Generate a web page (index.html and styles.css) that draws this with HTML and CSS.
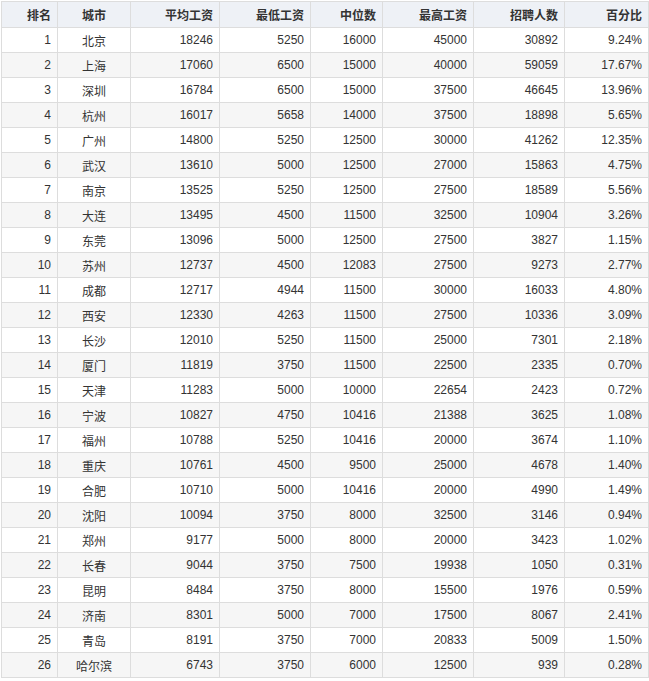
FILE: index.html
```html
<!DOCTYPE html>
<html lang="zh">
<head>
<meta charset="utf-8">
<title>城市工资</title>
<link rel="stylesheet" href="styles.css">
</head>
<body>
<table class="salary">
<colgroup>
<col class="c-rank"><col class="c-city"><col class="c-avg"><col class="c-min"><col class="c-med"><col class="c-max"><col class="c-cnt"><col class="c-pct">
</colgroup>
<thead>
<tr><th>排名</th><th class="city">城市</th><th>平均工资</th><th>最低工资</th><th>中位数</th><th>最高工资</th><th>招聘人数</th><th>百分比</th></tr>
</thead>
<tbody>
<tr><td>1</td><td class="city">北京</td><td>18246</td><td>5250</td><td>16000</td><td>45000</td><td>30892</td><td>9.24%</td></tr>
<tr><td>2</td><td class="city">上海</td><td>17060</td><td>6500</td><td>15000</td><td>40000</td><td>59059</td><td>17.67%</td></tr>
<tr><td>3</td><td class="city">深圳</td><td>16784</td><td>6500</td><td>15000</td><td>37500</td><td>46645</td><td>13.96%</td></tr>
<tr><td>4</td><td class="city">杭州</td><td>16017</td><td>5658</td><td>14000</td><td>37500</td><td>18898</td><td>5.65%</td></tr>
<tr><td>5</td><td class="city">广州</td><td>14800</td><td>5250</td><td>12500</td><td>30000</td><td>41262</td><td>12.35%</td></tr>
<tr><td>6</td><td class="city">武汉</td><td>13610</td><td>5000</td><td>12500</td><td>27000</td><td>15863</td><td>4.75%</td></tr>
<tr><td>7</td><td class="city">南京</td><td>13525</td><td>5250</td><td>12500</td><td>27500</td><td>18589</td><td>5.56%</td></tr>
<tr><td>8</td><td class="city">大连</td><td>13495</td><td>4500</td><td>11500</td><td>32500</td><td>10904</td><td>3.26%</td></tr>
<tr><td>9</td><td class="city">东莞</td><td>13096</td><td>5000</td><td>12500</td><td>27500</td><td>3827</td><td>1.15%</td></tr>
<tr><td>10</td><td class="city">苏州</td><td>12737</td><td>4500</td><td>12083</td><td>27500</td><td>9273</td><td>2.77%</td></tr>
<tr><td>11</td><td class="city">成都</td><td>12717</td><td>4944</td><td>11500</td><td>30000</td><td>16033</td><td>4.80%</td></tr>
<tr><td>12</td><td class="city">西安</td><td>12330</td><td>4263</td><td>11500</td><td>27500</td><td>10336</td><td>3.09%</td></tr>
<tr><td>13</td><td class="city">长沙</td><td>12010</td><td>5250</td><td>11500</td><td>25000</td><td>7301</td><td>2.18%</td></tr>
<tr><td>14</td><td class="city">厦门</td><td>11819</td><td>3750</td><td>11500</td><td>22500</td><td>2335</td><td>0.70%</td></tr>
<tr><td>15</td><td class="city">天津</td><td>11283</td><td>5000</td><td>10000</td><td>22654</td><td>2423</td><td>0.72%</td></tr>
<tr><td>16</td><td class="city">宁波</td><td>10827</td><td>4750</td><td>10416</td><td>21388</td><td>3625</td><td>1.08%</td></tr>
<tr><td>17</td><td class="city">福州</td><td>10788</td><td>5250</td><td>10416</td><td>20000</td><td>3674</td><td>1.10%</td></tr>
<tr><td>18</td><td class="city">重庆</td><td>10761</td><td>4500</td><td>9500</td><td>25000</td><td>4678</td><td>1.40%</td></tr>
<tr><td>19</td><td class="city">合肥</td><td>10710</td><td>5000</td><td>10416</td><td>20000</td><td>4990</td><td>1.49%</td></tr>
<tr><td>20</td><td class="city">沈阳</td><td>10094</td><td>3750</td><td>8000</td><td>32500</td><td>3146</td><td>0.94%</td></tr>
<tr><td>21</td><td class="city">郑州</td><td>9177</td><td>5000</td><td>8000</td><td>20000</td><td>3423</td><td>1.02%</td></tr>
<tr><td>22</td><td class="city">长春</td><td>9044</td><td>3750</td><td>7500</td><td>19938</td><td>1050</td><td>0.31%</td></tr>
<tr><td>23</td><td class="city">昆明</td><td>8484</td><td>3750</td><td>8000</td><td>15500</td><td>1976</td><td>0.59%</td></tr>
<tr><td>24</td><td class="city">济南</td><td>8301</td><td>5000</td><td>7000</td><td>17500</td><td>8067</td><td>2.41%</td></tr>
<tr><td>25</td><td class="city">青岛</td><td>8191</td><td>3750</td><td>7000</td><td>20833</td><td>5009</td><td>1.50%</td></tr>
<tr><td>26</td><td class="city">哈尔滨</td><td>6743</td><td>3750</td><td>6000</td><td>12500</td><td>939</td><td>0.28%</td></tr>
</tbody>
</table>
</body>
</html>
```
FILE: styles.css
```css
html, body {
  margin: 0;
  padding: 0;
  background: #fff;
}
body {
  padding: 1px 0 0 1px;
  font-family: "Liberation Sans", "Noto Sans CJK SC", sans-serif;
  font-size: 12px;
  color: #333;
}
.salary {
  border-collapse: collapse;
  table-layout: fixed;
  width: 648px;
}
.c-rank { width: 56px; }
.c-city { width: 73px; }
.c-avg { width: 89px; }
.c-min { width: 91px; }
.c-med { width: 72px; }
.c-max { width: 91px; }
.c-cnt { width: 91px; }
.c-pct { width: 84px; }
.salary th,
.salary td {
  border: 1px solid #dddddd;
  padding: 0 6px;
  text-align: right;
  white-space: nowrap;
  overflow: hidden;
}
.salary th {
  height: 25px;
  background: #eef1f6;
  font-weight: bold;
  color: #333;
}
.salary td {
  height: 24px;
}
.salary tbody tr:nth-child(even) td {
  background: #f6f6f6;
}
.salary .city {
  text-align: center;
}
```
